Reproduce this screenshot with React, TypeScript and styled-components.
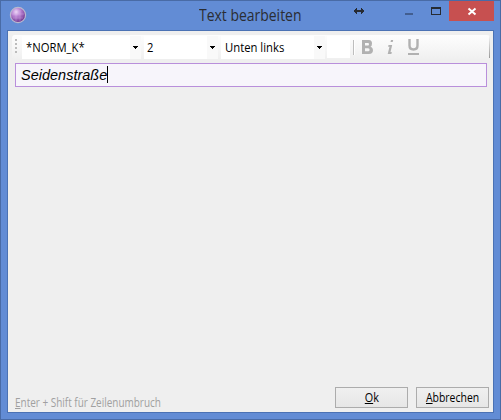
import React from "react";
import styled, { createGlobalStyle } from "styled-components";

const GlobalStyle = createGlobalStyle`
  * { box-sizing: border-box; }
  body { margin: 0; overflow: hidden; }
`;

const Window = styled.div`
  width: 501px;
  height: 420px;
  display: flex;
  flex-direction: column;
  padding: 0 6px 6px;
  border: 1px solid #496ba6;
  background: #628cd5;
  font-family: "Open Sans", "Noto Sans", sans-serif;
  font-size: 12px;
  color: #000;
  cursor: default;
`;

const TitleBar = styled.header`
  height: 29px;
  display: grid;
  grid-template-columns: 20px 1fr 12px 47px 36px 45px;
  align-items: start;
  flex: none;
`;

const Fitted = styled.span<{ $scale: number }>`
  display: inline-block;
  white-space: pre;
  transform: scaleX(${(p) => p.$scale});
  transform-origin: left center;
`;

const Title = styled.h1`
  margin: 4px 0 0 172px;
  font-size: 15.5px;
  line-height: 21px;
  font-weight: 400;
  color: #2a2d33;
  white-space: nowrap;
`;

const AppIcon = styled.svg`
  display: block;
  margin: 5px 0 0 2px;
`;

const Glyph = styled.svg`
  display: block;
`;

const CloseButton = styled.button`
  width: 45px;
  height: 20px;
  padding: 0;
  border: 0;
  background: #c75050;
`;

const Client = styled.main`
  flex: 1;
  display: flex;
  flex-direction: column;
  border: 1px solid #4b72b4;
  background: #efefef;
  padding: 4px 4px 4px 4px;
`;

const Toolbar = styled.div`
  width: 478px;
  height: 25px;
  display: flex;
  align-items: flex-start;
  flex: none;
  border-radius: 3px;
  background: linear-gradient(#fdfdfd, #f6f6f6 55%, #efefef);
`;

const Grip = styled.div`
  width: 2px;
  height: 14px;
  margin: 4px 5px 0 3px;
  background: repeating-linear-gradient(#bcbcbc 0 2px, transparent 2px 4px);
`;

const Combo = styled.div<{ $width: number; $gap: number; $indent: number }>`
  display: flex;
  width: ${(p) => p.$width}px;
  height: 23px;
  margin: 1px ${(p) => p.$gap}px 0 0;
  padding-left: ${(p) => p.$indent}px;
  background: #fff;
  line-height: 24px;
  white-space: nowrap;
`;

const ComboText = styled.span`
  flex: 1;
  min-width: 0;
`;

const ComboArrow = styled.span`
  width: 11px;
  height: 23px;
  display: flex;
  align-items: center;
  justify-content: center;
  background: #f9f9f9;
`;

const Swatch = styled.div`
  width: 23px;
  height: 22px;
  margin-top: 1px;
  background: #fff;
`;

const Separator = styled.div`
  width: 2px;
  height: 15px;
  margin: 5px 5px 0 3px;
  background: linear-gradient(90deg, #bebebe 50%, #fff 50%);
`;

const StyleIcons = styled.svg`
  display: block;
`;

const ToolbarEnd = styled.div`
  width: 1px;
  height: 22px;
  margin: 1px 0 0 auto;
  background: linear-gradient(#f4f4f4, #999);
`;

const TextField = styled.div`
  width: 472px;
  height: 24px;
  margin: 3px 0 0 3px;
  padding: 2px 0 0 5px;
  display: flex;
  flex: none;
  border: 1px solid #b98fdb;
  background: #f7f5fb;
  font: italic 14.5px/19px "Liberation Sans", Arial, sans-serif;
`;

const Value = styled.span`
  width: 86px;
  white-space: nowrap;
`;

const Caret = styled.span`
  width: 1px;
  height: 17px;
  background: #000;
`;

const Footer = styled.footer`
  margin: auto 0 -1px;
  display: flex;
  gap: 8px;
`;

const Hint = styled.div`
  flex: 1;
  min-width: 0;
  padding: 8px 0 0 3px;
  line-height: 16px;
  height: 22px;
  font-size: 12px;
  color: #a0a0a0;
  white-space: nowrap;
`;

const DialogButton = styled.button`
  width: 73px;
  height: 21px;
  padding: 0;
  display: flex;
  justify-content: center;
  border: 1px solid #acacac;
  background: linear-gradient(#f0f0f0, #e6e6e6);
  font: inherit;
  line-height: 20px;
  color: #000;
`;

const CenteredText = styled(Fitted)`
  transform-origin: center;
`;

const Mnemonic = styled.span`
  text-decoration: underline;
  text-decoration-thickness: 1px;
  text-underline-offset: 1px;
  text-decoration-skip-ink: none;
`;

function DropArrow() {
  return (
    <ComboArrow>
      <Glyph width="5" height="3" shapeRendering="crispEdges">
        <path d="M0 0h5v1H4v1H3v1H2V2H1V1H0z" />
      </Glyph>
    </ComboArrow>
  );
}

export default function App() {
  return (
    <>
      <GlobalStyle />
      <Window>
        <TitleBar>
          <AppIcon width="18" height="18" viewBox="0 0 18 18">
            <defs>
              <radialGradient id="orb" cx="38%" cy="30%" r="70%">
                <stop offset="0" stopColor="#eed8f7" />
                <stop offset=".4" stopColor="#bb86d5" />
                <stop offset="1" stopColor="#70358f" />
              </radialGradient>
            </defs>
            <circle cx="9" cy="9" r="7.6" fill="url(#orb)" stroke="#b9b7cf" strokeWidth="1.2" />
            <path d="M3 8h12M4 12h10M7 3v12M11 4v11" stroke="#e5c5f1" strokeWidth=".6" opacity=".45" />
          </AppIcon>
          <Title><Fitted $scale={0.9}>Text bearbeiten</Fitted></Title>
          <Glyph width="12" height="20" viewBox="0 0 12 20">
            <path d="M1 9h8v2H1zM0 9h1v2H0zM1 8h2v4H1zM2 7h1v6H2zM7 7h1v6H7zM8 8h1v4H8zM9 9h1v2H9z" fill="#272b33" shapeRendering="crispEdges" />
          </Glyph>
          <Glyph width="47" height="20">
            <rect x="39" y="12" width="8" height="2" fill="#425e90" shapeRendering="crispEdges" />
          </Glyph>
          <Glyph width="36" height="20">
            <path d="M18 6h10v8H18zM19 8v5h8V8z" fill="#262b33" fillRule="evenodd" shapeRendering="crispEdges" />
          </Glyph>
          <CloseButton aria-label="Schließen">
            <Glyph width="45" height="20">
              <path d="M19.500 7.500l7 6m0-6l-7 6" stroke="#fff" strokeWidth="2" />
            </Glyph>
          </CloseButton>
        </TitleBar>
        <Client>
          <Toolbar>
            <Grip />
            <Combo $width={119} $gap={3} $indent={4}>
              <ComboText><Fitted $scale={0.94}>*NORM_K*</Fitted></ComboText>
              <DropArrow />
            </Combo>
            <Combo $width={74} $gap={3} $indent={3}>
              <ComboText><Fitted $scale={0.93}>2</Fitted></ComboText>
              <DropArrow />
            </Combo>
            <Combo $width={104} $gap={2} $indent={4}>
              <ComboText><Fitted $scale={0.94}>Unten links</Fitted></ComboText>
              <DropArrow />
            </Combo>
            <Swatch />
            <Separator />
            <StyleIcons width="62" height="24" viewBox="360 35 62 24">
              <path fill="#b1b1b1" fillRule="evenodd" d="M362 40h7q3 0 3 3.500q0 2.500-1.500 3q2.500 1 2.500 3.500q0 4-4 4h-7zM365 43v2.500h3q1 0 1-1.200T368 43zM365 48.300v3h3.200q1.400 0 1.400-1.500t-1.400-1.500z" />
              <path d="M391 40h2.200l-.5 2h-2.200zM388.500 45h3.700l-1.700 7h1.300l-.4 2h-3.700l1.800-7.200h-1.400z" fill="#b1b1b1" />
              <path d="M409.500 39v6.500q0 4 4 4t4-4V39" fill="none" stroke="#b1b1b1" strokeWidth="2.400" />
              <path d="M408 53h11v2h-11z" fill="#b1b1b1" />
            </StyleIcons>
            <ToolbarEnd />
          </Toolbar>
          <TextField>
            <Value>Seidenstraße</Value>
            <Caret />
          </TextField>
          <Footer>
            <Hint><Fitted $scale={0.83}><Mnemonic>E</Mnemonic>nter + Shift für Zeilenumbruch</Fitted></Hint>
            <DialogButton><CenteredText $scale={0.9}><Mnemonic>O</Mnemonic>k</CenteredText></DialogButton>
            <DialogButton><CenteredText $scale={0.87}><Mnemonic>A</Mnemonic>bbrechen</CenteredText></DialogButton>
          </Footer>
        </Client>
      </Window>
    </>
  );
}
